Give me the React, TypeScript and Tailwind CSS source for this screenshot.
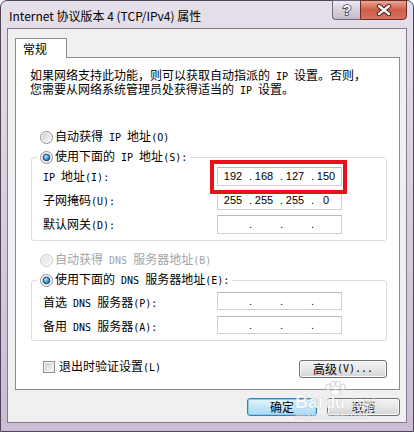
import React from "react";

const cjk = "font-['Noto_Sans_CJK_SC',sans-serif]";

// ascii runs rendered narrower, like the half-width latin of the dialog font
function T({ s }: { s: string }) {
  const parts = s.split(/([\x20-\x7e]+)/).filter(Boolean);
  return (
    <>
      {parts.map((p, i) =>
        /^[\x20-\x7e]+$/.test(p) ? (
          <span key={i} className="whitespace-pre font-['DejaVu_Sans_Mono',monospace] text-[10px]">
            {p}
          </span>
        ) : (
          <span key={i}>{p}</span>
        )
      )}
    </>
  );
}

function Radio({ on, off }: { on?: boolean; off?: boolean }) {
  const id = React.useId().replace(/[^a-zA-Z0-9]/g, "");
  return (
    <svg width="13" height="13" viewBox="0 0 13 13" className="shrink-0">
      <defs>
        <linearGradient id={id + "g"} x1="0" y1="0" x2="1" y2="1">
          <stop offset="0" stopColor="#cfcfcf" />
          <stop offset="1" stopColor="#f7f7f7" />
        </linearGradient>
        <radialGradient id={id + "b"} cx="0.4" cy="0.35" r="0.75">
          <stop offset="0" stopColor="#b9e8ff" />
          <stop offset="0.55" stopColor="#3a98dc" />
          <stop offset="1" stopColor="#0d4c88" />
        </radialGradient>
      </defs>
      <circle cx="6.5" cy="6.5" r="6" fill="#f6f6f6" stroke={off ? "#cacaca" : "#8e8f8f"} />
      <circle cx="6.5" cy="6.5" r="4.5" fill={`url(#${id}g)`} opacity={off ? 0.45 : 1} />
      {on && <circle cx="6.5" cy="6.5" r="3.3" fill={`url(#${id}b)`} stroke="#1b3f66" strokeWidth="0.9" />}
    </svg>
  );
}

function Check() {
  return (
    <div className="flex h-[12px] w-[12px] shrink-0 items-center justify-center border border-[#8e8f8f] bg-[#f4f4f4]">
      <div className="h-[8px] w-[8px] bg-gradient-to-br from-[#d0d0d0] to-[#f6f6f6]" />
    </div>
  );
}

function IpBox({ v, h }: { v: string[]; h: string }) {
  return (
    <div
      className={`flex w-[125px] ${h} items-center border border-[#ccd1d7] border-t-[#b5b9bf] bg-white pl-[3px] font-['Liberation_Sans',sans-serif] text-[11px] leading-none text-black`}
    >
      {[0, 1, 2, 3].map((i) => (
        <React.Fragment key={i}>
          {i > 0 && <span className="w-[7px] text-right">.</span>}
          <span className="w-[24px] text-center">{v[i] ?? ""}</span>
        </React.Fragment>
      ))}
    </div>
  );
}

function Btn({ children, w, primary }: { children: React.ReactNode; w: string; primary?: boolean }) {
  return (
    <div
      className={`flex h-[18px] ${w} items-center justify-center rounded-[3px] border text-[12px] leading-none ${
        primary
          ? "border-[#3c7fb1] bg-gradient-to-b from-[#e6f5fd] via-[#c2e7fa] to-[#a9dbf5] shadow-[inset_0_0_0_1px_#7fd0f5]"
          : "border-[#707070] bg-gradient-to-b from-[#f4f4f4] via-[#e7e7e7] to-[#d3d3d3] shadow-[inset_0_0_0_1px_#fbfbfb]"
      }`}
    >
      {children}
    </div>
  );
}

export default function App() {
  const empty = ["", "", "", ""];
  return (
    <div className={`h-[432px] w-[414px] overflow-hidden bg-white ${cjk} text-black`}>
      <div className="relative flex h-[432px] w-[414px] flex-col rounded-t-[7px] border border-[#4e4556] bg-gradient-to-b from-[#e6e0ea] via-[#d8cddf] to-[#cbbcd4] px-[6px] pb-[8px]">
        {/* title bar */}
        <div className="flex h-[27px] items-start justify-between">
          <div className="ml-[2px] mt-[7px] text-[12px] leading-[16px] text-black">Internet 协议版本 4 (TCP/IPv4) 属性</div>
          <div className="-mt-[1px] flex">
            <div className="flex h-[20px] w-[28px] items-center justify-center rounded-bl-[4px] border border-r-0 border-[#6f6478] bg-gradient-to-b from-[#eeeaf1] via-[#d7d0dc] to-[#c4bacb]">
              <svg width="12" height="14" viewBox="0 0 12 14">
                <text x="6" y="12" textAnchor="middle" fontFamily="Liberation Sans, sans-serif" fontWeight="700" fontSize="14" fill="#fff" stroke="#4a4250" strokeWidth="1.6" paintOrder="stroke">?</text>
              </svg>
            </div>
            <div className="flex h-[20px] w-[47px] items-center justify-center rounded-br-[4px] border border-[#6a2e2a] bg-gradient-to-b from-[#e9a595] via-[#cf5a45] to-[#d77560]">
              <svg width="16" height="12" viewBox="0 0 16 12">
                <path d="M3 2 L13 10 M13 2 L3 10" stroke="#3b1a17" strokeWidth="4.2" strokeLinecap="round" />
                <path d="M3 2 L13 10 M13 2 L3 10" stroke="#fff" strokeWidth="2.4" strokeLinecap="round" />
              </svg>
            </div>
          </div>
        </div>

        {/* client area */}
        <div className="flex flex-1 flex-col border border-[#857a8d] bg-[#f0f0f0] pl-[7px] pr-[6px] pt-[9px]">
          <div className="relative z-10 -mb-[1px] flex h-[20px] w-[52px] items-start border border-b-0 border-[#898c95] bg-white pl-[7px] pt-[2px] text-[12px] leading-[16px]">
            常规
          </div>
          <div className="flex h-[333px] flex-col border border-[#898c95] bg-white">
            <p className="ml-[14px] mt-[11px] text-[12px] leading-[12px]">
              <T s="如果网络支持此功能，则可以获取自动指派的 IP 设置。否则，" />
              <br />
              <T s="您需要从网络系统管理员处获得适当的 IP 设置。" />
            </p>

            <div className="ml-[24px] mt-[32px] flex h-[16px] items-center gap-[2px] text-[12px] leading-[12px]">
              <Radio />
              <span>
                <T s="自动获得 IP 地址(O)" />
              </span>
            </div>

            <fieldset className="ml-[15px] mt-[4px] w-[356px] rounded-[3px] border border-[#d5dfe5] pb-[6px] pt-[2px]">
              <legend className="ml-[5px] px-[3px]">
                <div className="flex h-[16px] items-center gap-[2px] text-[12px] leading-[12px]">
                  <Radio on />
                  <span>
                    <T s="使用下面的 IP 地址(S):" />
                  </span>
                </div>
              </legend>
              <div className="flex flex-col gap-[5px] pl-[11px] text-[12px] leading-[12px]">
                <div className="flex h-[19px] items-center">
                  <div className="w-[174px] pt-[1px]">
                    <T s="IP 地址(I):" />
                  </div>
                  <div className="relative z-10 -mb-[8px] -ml-[7px] -mr-[5px] -mt-[7px] border-4 border-[#e8101b] pb-[4px] pl-[3px] pr-[1px] pt-[3px]">
                    <IpBox v={["192", "168", "127", "150"]} h="h-[19px]" />
                  </div>
                </div>
                <div className="flex h-[19px] items-center">
                  <div className="w-[174px] pt-[1px]">
                    <T s="子网掩码(U):" />
                  </div>
                  <IpBox v={["255", "255", "255", "0"]} h="h-[19px]" />
                </div>
                <div className="flex h-[19px] items-center">
                  <div className="w-[174px] pt-[1px]">
                    <T s="默认网关(D):" />
                  </div>
                  <IpBox v={empty} h="h-[19px]" />
                </div>
              </div>
            </fieldset>

            <div className="ml-[24px] mt-[11px] flex h-[16px] items-center gap-[2px] text-[12px] leading-[12px] text-[#a3a3a3]">
              <Radio off />
              <span>
                <T s="自动获得 DNS 服务器地址(B)" />
              </span>
            </div>

            <fieldset className="ml-[15px] mt-[4px] w-[356px] rounded-[3px] border border-[#d5dfe5] pb-[6px] pt-[4px]">
              <legend className="ml-[5px] px-[3px]">
                <div className="flex h-[16px] items-center gap-[2px] text-[12px] leading-[12px]">
                  <Radio on />
                  <span>
                    <T s="使用下面的 DNS 服务器地址(E):" />
                  </span>
                </div>
              </legend>
              <div className="flex flex-col gap-[6px] pl-[11px] text-[12px] leading-[12px]">
                <div className="flex h-[18px] items-center">
                  <div className="w-[174px] pt-[3px]">
                    <T s="首选 DNS 服务器(P):" />
                  </div>
                  <IpBox v={empty} h="h-[18px]" />
                </div>
                <div className="flex h-[18px] items-center">
                  <div className="w-[174px] pt-[3px]">
                    <T s="备用 DNS 服务器(A):" />
                  </div>
                  <IpBox v={empty} h="h-[18px]" />
                </div>
              </div>
            </fieldset>

            <div className="mt-[19px] flex items-start justify-between pl-[27px] pr-[12px] text-[12px] leading-[12px]">
              <div className="flex items-center gap-[4px]">
                <Check />
                <span>
                  <T s="退出时验证设置(L)" />
                </span>
              </div>
              <Btn w="w-[88px]">
                <T s="高级(V)..." />
              </Btn>
            </div>
          </div>

          <div className="mt-[8px] flex justify-end gap-[10px]">
            <Btn w="w-[70px]" primary>
              确定
            </Btn>
            <Btn w="w-[73px]">取消</Btn>
          </div>
        </div>

        {/* baidu watermark */}
        <div className="pointer-events-none absolute left-[294px] top-[380px] flex flex-col items-start opacity-80">
          <div className="flex items-end">
            <span className="font-['Liberation_Sans',sans-serif] text-[18px] font-bold leading-none text-white [text-shadow:0_0_1px_#9a9a9a]">Bai</span>
            <div className="flex flex-col items-center">
              <svg width="24" height="14" viewBox="0 0 24 14">
                <g fill="#fff" stroke="#b8b8b8" strokeWidth="0.8">
                  <ellipse cx="5" cy="6" rx="2.3" ry="3" />
                  <ellipse cx="10" cy="3" rx="2.3" ry="3" />
                  <ellipse cx="15" cy="3" rx="2.3" ry="3" />
                  <ellipse cx="20" cy="6" rx="2.3" ry="3" />
                  <ellipse cx="12.5" cy="11.5" rx="5" ry="3" />
                </g>
              </svg>
              <span className="font-['Liberation_Sans',sans-serif] text-[16px] font-bold leading-none text-white [text-shadow:0_0_1px_#9a9a9a]">du</span>
            </div>
            <span className="ml-[3px] text-[14px] leading-none text-white [text-shadow:0_0_1px_#9a9a9a]">经验</span>
          </div>
          <span className="mt-[1px] font-['Liberation_Sans',sans-serif] text-[9px] leading-none text-white [text-shadow:0_0_1px_#a0a0a0]">jingyan.baidu.com</span>
        </div>
      </div>
    </div>
  );
}
